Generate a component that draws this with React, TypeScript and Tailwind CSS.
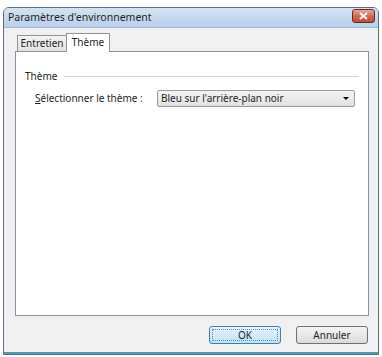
export default function App() {
  return (
    <div
      className="w-[382px] h-[357px] bg-white pt-[7px] pl-[3px] text-[10px] text-[#1e1e1e]"
      style={{ fontFamily: '"Noto Sans", "DejaVu Sans", sans-serif' }}
    >
      <div className="w-[376px] h-[348px] flex flex-col border border-[#5b6f86] rounded-t-[6px] overflow-hidden">
        {/* title bar */}
        <div className="h-[20px] flex items-center justify-between bg-gradient-to-b from-[#d3e2f3] to-[#b9d0ea] border-b border-[#9fb6d0] pl-[4px] pr-[3px]">
          <span className="text-[10.5px] leading-none">Paramètres d'environnement</span>
          <button className="w-[23px] h-[14px] mt-[-3px] flex items-center justify-center rounded-[3px] border border-[#6b2a1d] bg-gradient-to-b from-[#e6a898] via-[#d06a52] to-[#c24c34]">
            <svg width="9" height="8" viewBox="0 0 9 8">
              <path d="M1 1 L8 7 M8 1 L1 7" stroke="white" strokeWidth="1.8" />
            </svg>
          </button>
        </div>

        {/* client */}
        <div className="flex-1 flex flex-col bg-[#f0f0f0] pl-[11px] pr-[9px] pt-[4px] border-b-2 border-[#4a9bb7]">
          {/* tabs */}
          <div className="flex items-end h-[19px] pl-[2px] relative z-10">
            <div className="h-[16px] w-[50px] flex items-center justify-center border border-b-0 border-[#8e9299] bg-gradient-to-b from-[#f3f3f3] to-[#e3e3e3]">
              Entretien
            </div>
            <div className="h-[19px] w-[44px] ml-[-1px] mb-[-1px] flex items-start justify-center pt-[1px] border border-b-0 border-[#8e9299] bg-white">
              Thème
            </div>
          </div>

          {/* panel */}
          <div className="h-[265px] bg-white border border-[#8e9299] flex flex-col px-[9px] pt-[17px]">
            <div className="flex items-center gap-[7px]">
              <span>Thème</span>
              <div className="flex-1 h-px bg-[#d0d4d9]" />
            </div>
            <div className="flex items-center mt-[6px] pl-[10px]">
              <span className="w-[122px]">
                <span className="underline">S</span>électionner le thème :
              </span>
              <div className="w-[198px] h-[17px] flex items-center justify-between rounded-[2px] border border-[#9c9c9c] bg-gradient-to-b from-[#f4f4f4] to-[#e2e2e2] pl-[3px] pr-[5px]">
                <span>Bleu sur l'arrière-plan noir</span>
                <svg width="6" height="3" viewBox="0 0 6 3">
                  <path d="M0 0 H6 L3 3 Z" fill="#000" />
                </svg>
              </div>
            </div>
          </div>

          {/* buttons */}
          <div className="flex justify-end gap-[15px] mt-[10px] pr-[1px]">
            <button className="w-[72px] h-[18px] rounded-[3px] border border-[#3c7fb1] bg-gradient-to-b from-[#e8f5fd] to-[#bfe2f5] p-[2px]">
              <div className="w-full h-full border border-dotted border-[#6a8ca3] flex items-center justify-center">
                OK
              </div>
            </button>
            <button className="w-[72px] h-[18px] rounded-[3px] border border-[#707070] bg-gradient-to-b from-[#f4f4f4] to-[#dcdcdc] flex items-center justify-center">
              Annuler
            </button>
          </div>
        </div>
      </div>
    </div>
  );
}
